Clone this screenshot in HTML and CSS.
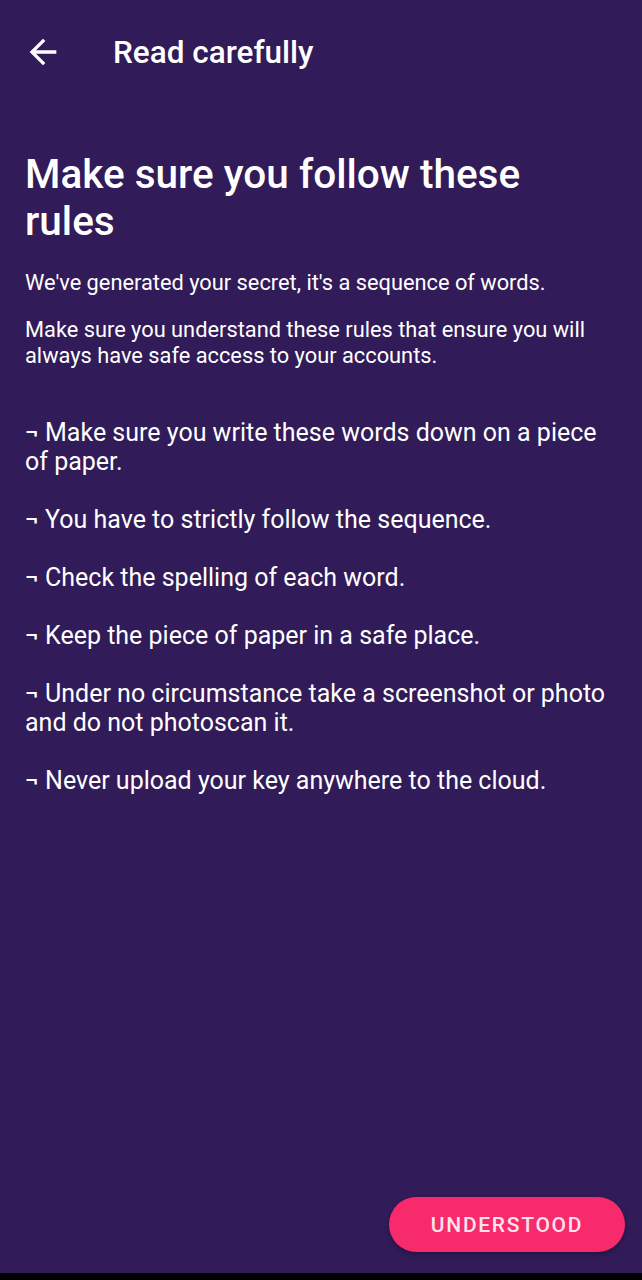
FILE: index.html
```html
<!DOCTYPE html>
<html lang="en">
<head>
<meta charset="utf-8">
<title>Read carefully</title>
<link rel="stylesheet" href="styles.css">
</head>
<body>
<div class="screen">
  <header class="toolbar">
    <button class="back" aria-label="Back">
      <svg width="40" height="40" viewBox="0 0 24 24"><path d="M20 11H7.83l5.59-5.59L12 4l-8 8 8 8 1.41-1.41L7.83 13H20v-2z" fill="#fff"/></svg>
    </button>
    <h1 class="toolbar-title">Read carefully</h1>
  </header>
  <main class="content">
    <h2 class="heading">Make sure you follow these rules</h2>
    <p class="intro">We've generated your secret, it's a sequence of words.</p>
    <p class="intro intro-2">Make sure you understand these rules that ensure you will always have safe access to your accounts.</p>
    <ul class="rules">
      <li>¬ Make sure you write these words down on a piece of paper.</li>
      <li>¬ You have to strictly follow the sequence.</li>
      <li>¬ Check the spelling of each word.</li>
      <li>¬ Keep the piece of paper in a safe place.</li>
      <li>¬ Under no circumstance take a screenshot or photo and do not photoscan it.</li>
      <li>¬ Never upload your key anywhere to the cloud.</li>
    </ul>
  </main>
  <footer class="actions">
    <button class="understood">UNDERSTOOD</button>
  </footer>
</div>
<div class="navbar"></div>
</body>
</html>
```
FILE: styles.css
```css
* { box-sizing: border-box; }
html, body { margin: 0; padding: 0; }
body {
  background: #000;
  font-family: Roboto, "Noto Sans", sans-serif;
  color: #fff;
  width: 642px;
  height: 1280px;
  display: flex;
  flex-direction: column;
}
.screen {
  background: #311b58;
  height: 1273px;
  display: flex;
  flex-direction: column;
}
.navbar { height: 7px; background: #000; }
.toolbar {
  height: 104px;
  display: flex;
  align-items: center;
  padding-left: 23px;
}
.back {
  background: none;
  border: 0;
  padding: 0;
  width: 40px;
  height: 40px;
  display: flex;
  margin-right: 50px;
}
.toolbar-title {
  margin: 0;
  font-size: 31.5px;
  font-weight: 500;
}
.content {
  flex: 1;
  padding: 47px 25px 0 25px;
}
.heading {
  margin: 0;
  padding-right: 40px;
  font-size: 40.5px;
  font-weight: 500;
  line-height: 47px;
}
.intro {
  margin: 25px 0 0;
  font-size: 21.8px;
  line-height: 26px;
}
.intro-2 { margin-top: 21px; }
.rules {
  list-style: none;
  margin: 49px 0 0;
  padding: 0;
  display: flex;
  flex-direction: column;
  gap: 29px;
}
.rules li {
  font-size: 25px;
  line-height: 29px;
}
.actions {
  display: flex;
  justify-content: flex-end;
  padding: 0 17px 21px 0;
}
.understood {
  width: 236px;
  height: 55px;
  border: 0;
  border-radius: 28px;
  background: #f72a6b;
  color: #fde3ec;
  font-family: Roboto, sans-serif;
  font-size: 21px;
  font-weight: 500;
  letter-spacing: 1.7px;
  box-shadow: 0 2px 4px rgba(0,0,0,0.3);
}
```
